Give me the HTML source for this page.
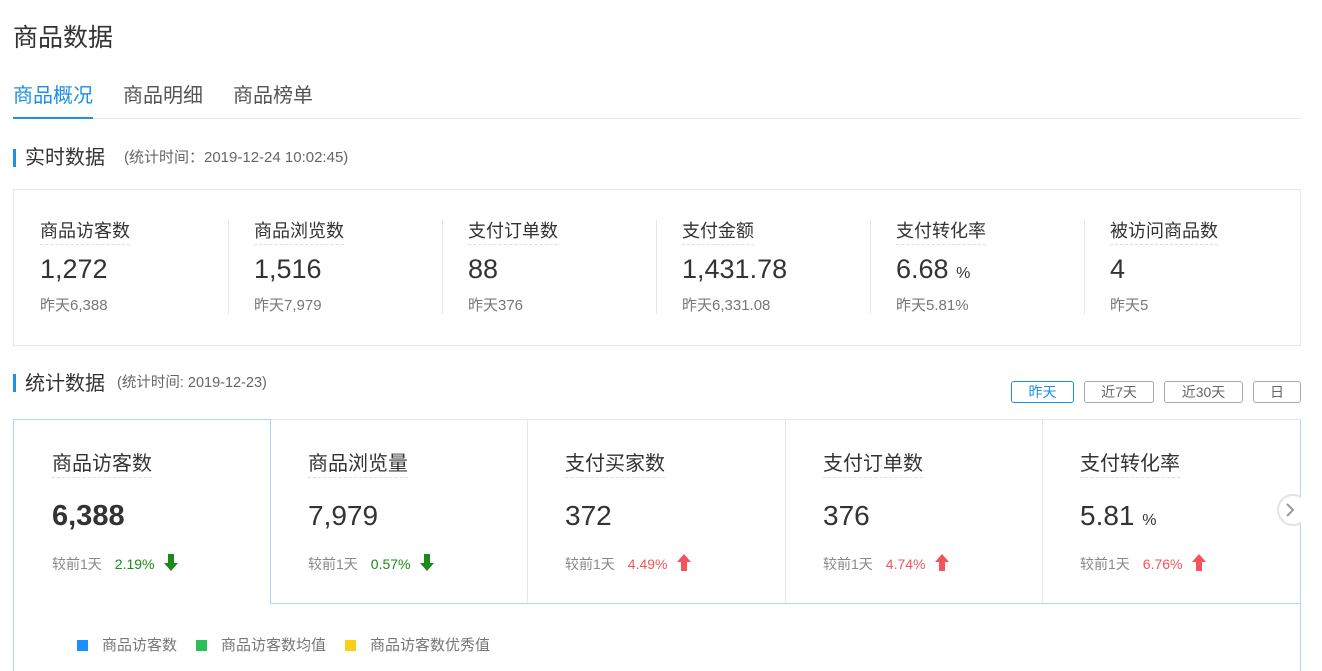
<!DOCTYPE html>
<html style="width:1322px;height:671px;overflow:hidden"><head><meta charset="utf-8"><style>
*{margin:0;padding:0;box-sizing:border-box}
body{width:1322px;height:671px;background:#fff;font-family:"Liberation Sans","Noto Sans CJK SC",sans-serif;color:#333;position:relative;overflow:hidden}
.a{position:absolute;white-space:nowrap}
.lbl{font-size:18px;color:#333;border-bottom:1px dashed #ddd;padding-bottom:2px;line-height:22px}
.lbl2{font-size:20px;color:#333;border-bottom:1px dashed #ddd;padding-bottom:1px;line-height:24px}
.num{font-size:27px;color:#333;line-height:30px;height:30px}
.pc{font-size:16px;line-height:0}
.sub{font-size:15px;color:#777;line-height:16px}
.vd{position:absolute;width:1px;background:#e6e6e6;top:220px;height:94px}
.btn{position:absolute;top:381px;height:22px;border:1px solid #aaa;border-radius:3px;font-size:14px;color:#666;text-align:center;line-height:20px}
.cmp{font-size:14px;color:#888;height:18px;line-height:18px}
.g{color:#1a8a1a;margin-left:13px}.r{color:#f5535b;margin-left:13px}
.ar{vertical-align:-2px;margin-left:9px}
</style></head><body>
<div class="a" style="left:13px;top:22px;font-size:25px;color:#333;line-height:32px">商品数据</div>
<div class="a" style="left:13px;top:83px;font-size:20px;color:#1e90e6;line-height:26px">商品概况</div>
<div class="a" style="left:123px;top:83px;font-size:20px;color:#555;line-height:26px">商品明细</div>
<div class="a" style="left:233px;top:83px;font-size:20px;color:#555;line-height:26px">商品榜单</div>
<div class="a" style="left:13px;top:118px;width:1288px;height:1px;background:#e6e6e6"></div>
<div class="a" style="left:13px;top:117px;width:80px;height:2px;background:#1e90e6"></div>

<div class="a" style="left:13px;top:149px;width:3px;height:18px;background:#1e90e6"></div>
<div class="a" style="left:25px;top:145px;font-size:20px;line-height:26px">实时数据</div>
<div class="a" style="left:124px;top:149px;font-size:15px;color:#666;line-height:18px">(统计时间：2019-12-24 10:02:45)</div>

<div class="a" style="left:13px;top:189px;width:1288px;height:157px;border:1px solid #e6e6e6"></div>
<div class="vd" style="left:228px"></div><div class="vd" style="left:442px"></div><div class="vd" style="left:656px"></div><div class="vd" style="left:870px"></div><div class="vd" style="left:1084px"></div>

<div class="a" style="left:40px;top:220px"><div class="lbl" style="display:inline-block">商品访客数</div><div class="num" style="margin-top:9px">1,272</div><div class="sub" style="margin-top:14px">昨天6,388</div></div>
<div class="a" style="left:254px;top:220px"><div class="lbl" style="display:inline-block">商品浏览数</div><div class="num" style="margin-top:9px">1,516</div><div class="sub" style="margin-top:14px">昨天7,979</div></div>
<div class="a" style="left:468px;top:220px"><div class="lbl" style="display:inline-block">支付订单数</div><div class="num" style="margin-top:9px">88</div><div class="sub" style="margin-top:14px">昨天376</div></div>
<div class="a" style="left:682px;top:220px"><div class="lbl" style="display:inline-block">支付金额</div><div class="num" style="margin-top:9px">1,431.78</div><div class="sub" style="margin-top:14px">昨天6,331.08</div></div>
<div class="a" style="left:896px;top:220px"><div class="lbl" style="display:inline-block">支付转化率</div><div class="num" style="margin-top:9px">6.68 <span class="pc">%</span></div><div class="sub" style="margin-top:14px">昨天5.81%</div></div>
<div class="a" style="left:1110px;top:220px"><div class="lbl" style="display:inline-block">被访问商品数</div><div class="num" style="margin-top:9px">4</div><div class="sub" style="margin-top:14px">昨天5</div></div>

<div class="a" style="left:13px;top:374px;width:3px;height:18px;background:#1e90e6"></div>
<div class="a" style="left:25px;top:371px;font-size:20px;line-height:26px">统计数据</div>
<div class="a" style="left:117px;top:375px;font-size:14.5px;color:#666;line-height:17px">(统计时间: 2019-12-23)</div>

<div class="btn" style="left:1011px;width:63px;border-color:#1e90e6;color:#1e90e6">昨天</div>
<div class="btn" style="left:1084px;width:70px">近7天</div>
<div class="btn" style="left:1164px;width:79px">近30天</div>
<div class="btn" style="left:1253px;width:48px">日</div>

<div class="a" style="left:13px;top:419px;width:1288px;height:270px;border:1px solid #aad8f5;border-top:1px solid #e6e6e6"></div>
<div class="a" style="left:13px;top:419px;width:258px;height:1px;background:#aad8f5"></div>
<div class="a" style="left:270px;top:420px;width:1px;height:184px;background:#aad8f5"></div>
<div class="a" style="left:270px;top:603px;width:1031px;height:1px;background:#aad8f5"></div>
<div class="a" style="left:527px;top:420px;width:1px;height:183px;background:#e6e6e6"></div>
<div class="a" style="left:785px;top:420px;width:1px;height:183px;background:#e6e6e6"></div>
<div class="a" style="left:1042px;top:420px;width:1px;height:183px;background:#e6e6e6"></div>

<div class="a" style="left:52px;top:452px"><div class="lbl2" style="display:inline-block">商品访客数</div><div class="num" style="margin-top:23px;font-weight:bold;font-size:29px">6,388</div><div class="cmp" style="margin-top:23px">较前1天<span class="g">2.19%</span><svg class="ar" width="14" height="17" viewBox="0 0 14 17"><path d="M4 0h6v9h4L7 17 0 9h4z" fill="#1a8a1a"/></svg></div></div>
<div class="a" style="left:308px;top:452px"><div class="lbl2" style="display:inline-block">商品浏览量</div><div class="num" style="margin-top:23px;font-size:28px">7,979</div><div class="cmp" style="margin-top:23px">较前1天<span class="g">0.57%</span><svg class="ar" width="14" height="17" viewBox="0 0 14 17"><path d="M4 0h6v9h4L7 17 0 9h4z" fill="#1a8a1a"/></svg></div></div>
<div class="a" style="left:565px;top:452px"><div class="lbl2" style="display:inline-block">支付买家数</div><div class="num" style="margin-top:23px;font-size:28px">372</div><div class="cmp" style="margin-top:23px">较前1天<span class="r">4.49%</span><svg class="ar" width="14" height="17" viewBox="0 0 14 17"><path d="M4 17h6V8h4L7 0 0 8h4z" fill="#f5535b"/></svg></div></div>
<div class="a" style="left:823px;top:452px"><div class="lbl2" style="display:inline-block">支付订单数</div><div class="num" style="margin-top:23px;font-size:28px">376</div><div class="cmp" style="margin-top:23px">较前1天<span class="r">4.74%</span><svg class="ar" width="14" height="17" viewBox="0 0 14 17"><path d="M4 17h6V8h4L7 0 0 8h4z" fill="#f5535b"/></svg></div></div>
<div class="a" style="left:1080px;top:452px"><div class="lbl2" style="display:inline-block">支付转化率</div><div class="num" style="margin-top:23px;font-size:28px">5.81 <span class="pc">%</span></div><div class="cmp" style="margin-top:23px">较前1天<span class="r">6.76%</span><svg class="ar" width="14" height="17" viewBox="0 0 14 17"><path d="M4 17h6V8h4L7 0 0 8h4z" fill="#f5535b"/></svg></div></div>

<div class="a" style="left:1277px;top:494px;width:32px;height:32px;border-radius:50%;border:2px solid #e3e3e3;background:#fff"></div>
<svg class="a" style="left:1284px;top:502px" width="12" height="16" viewBox="0 0 12 16"><path d="M3 2l6 6-6 6" stroke="#999" stroke-width="2" fill="none"/></svg>
<div class="a" style="left:1301px;top:480px;width:21px;height:60px;background:#fff"></div>

<div class="a" style="left:77px;top:640px;width:11px;height:11px;background:#1890ff"></div>
<div class="a" style="left:102px;top:637px;font-size:15px;color:#777;line-height:18px">商品访客数</div>
<div class="a" style="left:196px;top:640px;width:11px;height:11px;background:#2bbf57"></div>
<div class="a" style="left:221px;top:637px;font-size:15px;color:#777;line-height:18px">商品访客数均值</div>
<div class="a" style="left:345px;top:640px;width:11px;height:11px;background:#fccf14"></div>
<div class="a" style="left:370px;top:637px;font-size:15px;color:#777;line-height:18px">商品访客数优秀值</div>
</body></html>
